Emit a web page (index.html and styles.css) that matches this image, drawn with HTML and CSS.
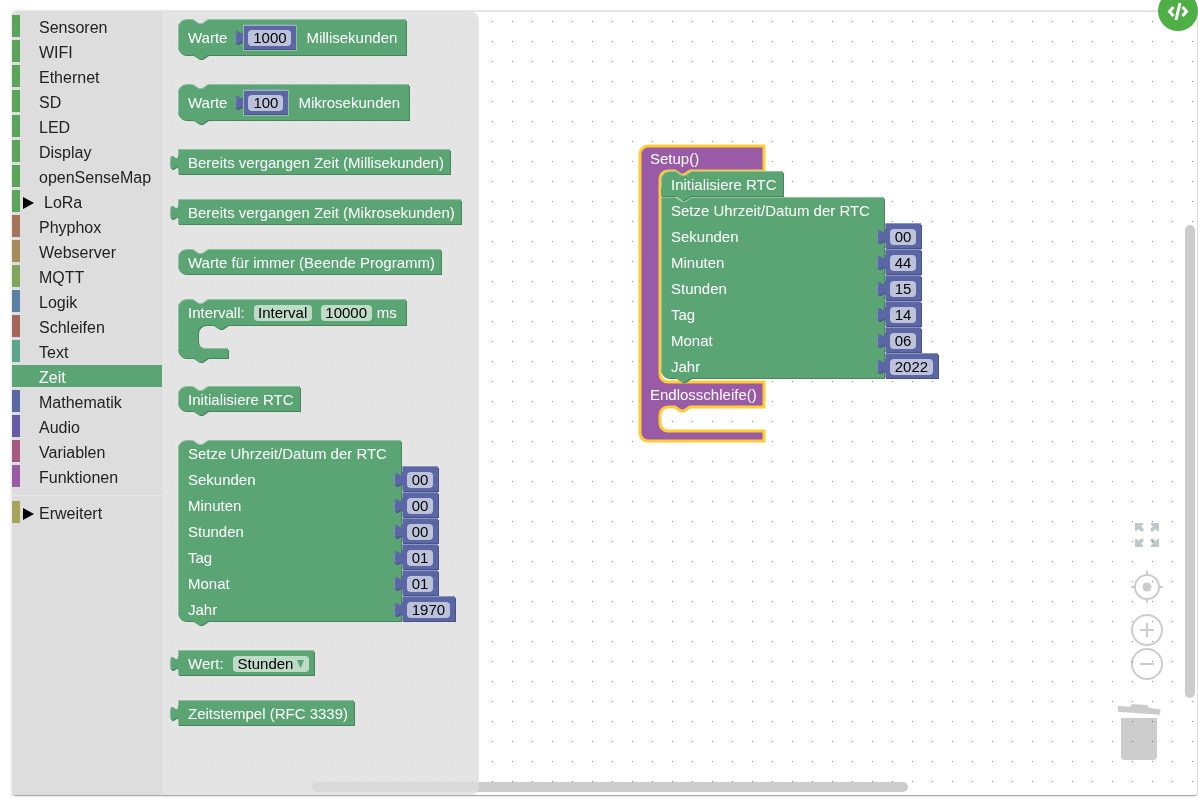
FILE: index.html
```html
<!DOCTYPE html>
<html lang="de">
<head>
<meta charset="utf-8">
<title>Blockeditor</title>
<link rel="stylesheet" href="styles.css">
</head>
<body>
<main class="editor">
  <nav class="toolbox" aria-label="Kategorien">
    <button class="category sensor">Sensoren</button>
    <button class="category sensor">WIFI</button>
    <button class="category sensor">Ethernet</button>
    <button class="category sensor">SD</button>
    <button class="category sensor">LED</button>
    <button class="category sensor">Display</button>
    <button class="category sensor">openSenseMap</button>
    <button class="category sensor parent nested"><svg class="caret" viewBox="0 0 11 12"><path d="M0 0L11 6L0 12Z"/></svg>LoRa</button>
    <button class="category phyphox">Phyphox</button>
    <button class="category webserver">Webserver</button>
    <button class="category mqtt">MQTT</button>
    <button class="category logic">Logik</button>
    <button class="category loops">Schleifen</button>
    <button class="category text">Text</button>
    <button class="category time selected">Zeit</button>
    <button class="category math">Mathematik</button>
    <button class="category audio">Audio</button>
    <button class="category variables">Variablen</button>
    <button class="category functions">Funktionen</button>
    <hr class="separator">
    <button class="category advanced parent"><svg class="caret" viewBox="0 0 11 12"><path d="M0 0L11 6L0 12Z"/></svg>Erweitert</button>
  </nav>

  <section class="workspace" aria-label="Arbeitsbereich">
    <svg class="dots" aria-hidden="true">
      <defs><pattern id="dot-grid" width="20" height="20" patternUnits="userSpaceOnUse"><rect class="dot" x="10" y="9" width="1" height="1"/></pattern></defs>
      <rect width="100%" height="100%" fill="url(#dot-grid)"/>
    </svg>

    <div class="block root" data-shape="selected">
      <div class="row">Setup()</div>
      <div class="mouth filled">
        <div class="block green" data-shape="statement"><div class="row">Initialisiere RTC</div></div>
        <div class="block green" data-shape="statement">
          <div class="row title">Setze Uhrzeit/Datum der RTC</div>
          <div class="row"><label for="w-sec">Sekunden</label><div class="plug"><div class="block number" data-shape="value"><input class="field two" id="w-sec" value="00"></div></div></div>
          <div class="row"><label for="w-min">Minuten</label><div class="plug"><div class="block number" data-shape="value"><input class="field two" id="w-min" value="44"></div></div></div>
          <div class="row"><label for="w-hour">Stunden</label><div class="plug"><div class="block number" data-shape="value"><input class="field two" id="w-hour" value="15"></div></div></div>
          <div class="row"><label for="w-day">Tag</label><div class="plug"><div class="block number" data-shape="value"><input class="field two" id="w-day" value="14"></div></div></div>
          <div class="row"><label for="w-month">Monat</label><div class="plug"><div class="block number" data-shape="value"><input class="field two" id="w-month" value="06"></div></div></div>
          <div class="row"><label for="w-year">Jahr</label><div class="plug"><div class="block number" data-shape="value"><input class="field four" id="w-year" value="2022"></div></div></div>
        </div>
      </div>
      <div class="row">Endlosschleife()</div>
      <div class="mouth"></div>
      <div class="foot"></div>
    </div>

    <div class="scrollbar vertical"></div>
    <div class="scrollbar horizontal"></div>

    <div class="controls">
      <button class="control fullscreen" aria-label="Vollbild"><svg width="24" height="24" viewBox="0 0 24 24"><g id="corner"><path d="M0 0H8V2L6 3L9 6.500L7 9L3 6L2 8H0Z"/></g><use href="#corner" transform="matrix(-1 0 0 1 24 0)"/><use href="#corner" transform="matrix(1 0 0 -1 0 24)"/><use href="#corner" transform="matrix(-1 0 0 -1 24 24)"/></svg></button>
      <button class="control target" aria-label="Zentrieren"><svg width="32" height="32" viewBox="0 0 32 32"><circle class="line" cx="16" cy="16" r="12"/><circle cx="16" cy="16" r="4.500"/><path class="line" d="M16 0V4M16 28V32M0 16H4M28 16H32"/></svg></button>
      <button class="control plus" aria-label="Vergrößern"><svg width="32" height="32" viewBox="0 0 32 32"><circle class="line" cx="16" cy="16" r="15"/><path class="line" d="M9 16H23M16 9V23"/></svg></button>
      <button class="control minus" aria-label="Verkleinern"><svg width="32" height="32" viewBox="0 0 32 32"><circle class="line" cx="16" cy="16" r="15"/><path class="line" d="M9 16H23"/></svg></button>
      <button class="control trash" aria-label="Papierkorb"><svg width="45" height="56" viewBox="0 0 45 56"><path d="M0 2L12 2.700L14 0L29 1L31.500 4L42.500 5.200L42 10.800L0 7.700Z"/><path d="M3 14H39V52A4 4 0 0 1 35 56H7A4 4 0 0 1 3 52Z"/></svg></button>
    </div>

    <div class="flyout">
      <div class="block green" data-shape="statement">
        <div class="row tall"><label for="f-ms">Warte</label><div class="block number inline" data-shape="value"><input class="field four" id="f-ms" value="1000"></div><span>Millisekunden</span></div>
      </div>
      <div class="block green" data-shape="statement">
        <div class="row tall"><label for="f-us">Warte</label><div class="block number inline" data-shape="value"><input class="field three" id="f-us" value="100"></div><span>Mikrosekunden</span></div>
      </div>
      <div class="block green" data-shape="value"><div class="row">Bereits vergangen Zeit (Millisekunden)</div></div>
      <div class="block green" data-shape="value"><div class="row">Bereits vergangen Zeit (Mikrosekunden)</div></div>
      <div class="block green" data-shape="final"><div class="row">Warte für immer (Beende Programm)</div></div>
      <div class="block green" data-shape="statement">
        <div class="row fields"><label for="f-name">Intervall:</label><input class="field name" id="f-name" value="Interval"><span class="pair"><input class="field five" id="f-interval" value="10000"><label for="f-interval">ms</label></span></div>
        <div class="mouth"></div>
        <div class="foot"></div>
      </div>
      <div class="block green" data-shape="statement"><div class="row">Initialisiere RTC</div></div>
      <div class="block green" data-shape="statement">
        <div class="row title">Setze Uhrzeit/Datum der RTC</div>
        <div class="row"><label for="f-sec">Sekunden</label><div class="plug"><div class="block number" data-shape="value"><input class="field two" id="f-sec" value="00"></div></div></div>
        <div class="row"><label for="f-min">Minuten</label><div class="plug"><div class="block number" data-shape="value"><input class="field two" id="f-min" value="00"></div></div></div>
        <div class="row"><label for="f-hour">Stunden</label><div class="plug"><div class="block number" data-shape="value"><input class="field two" id="f-hour" value="00"></div></div></div>
        <div class="row"><label for="f-day">Tag</label><div class="plug"><div class="block number" data-shape="value"><input class="field two" id="f-day" value="01"></div></div></div>
        <div class="row"><label for="f-month">Monat</label><div class="plug"><div class="block number" data-shape="value"><input class="field two" id="f-month" value="01"></div></div></div>
        <div class="row"><label for="f-year">Jahr</label><div class="plug"><div class="block number" data-shape="value"><input class="field four" id="f-year" value="1970"></div></div></div>
      </div>
      <div class="block green" data-shape="value">
        <div class="row choice"><label for="f-unit">Wert:</label><span class="dropdown"><select id="f-unit"><option>Stunden</option></select><svg width="7" height="8" viewBox="0 0 7 8"><path d="M0 0H7L3.500 8Z"/></svg></span></div>
      </div>
      <div class="block green" data-shape="value"><div class="row">Zeitstempel (RFC 3339)</div></div>
    </div>
  </section>
</main>
<button class="code-toggle" aria-label="Code anzeigen"><svg width="24" height="20" viewBox="0 0 24 20"><path d="M7.500 6L3.500 10.500L7.500 15M16.500 6L20.500 10.500L16.500 15M14 2L10 19"/></svg></button>
<script src="blocks.js"></script>
</body>
</html>
```
FILE: styles.css
```css
* { box-sizing: border-box; }

body {
  margin: 0;
  background: #fff;
  font-family: "Liberation Sans", Arial, sans-serif;
  overflow: hidden;
}

button, input, select { font: inherit; border: 0; margin: 0; padding: 0; background: none; }

.editor {
  display: flex;
  margin: 11px 0 12px 12px;
  height: calc(100vh - 23px);
  border: 1px solid #dedede;
  border-left: 0;
  border-bottom-color: #a8a8a8;
  border-radius: 4px;
  box-shadow: 0 0 3px rgba(0, 0, 0, .2);
  overflow: hidden;
}

/* Toolbox */
.toolbox {
  display: flex;
  flex-direction: column;
  gap: 3px;
  flex: 0 0 150px;
  padding-top: 3px;
  background: #ddd;
}

.category {
  display: flex;
  align-items: center;
  height: 22px;
  padding-top: 3px;
  padding-left: 19px;
  border-left: 8px solid;
  color: #222;
  font-size: 16px;
  line-height: 19px;
  text-align: left;
}
.category.parent { padding-left: 3px; gap: 5px; }
.category.nested { gap: 10px; }
.caret { width: 11px; height: 12px; fill: #000; }
.separator { width: 100%; height: 1px; margin: 5px 0 2px; border: 0; background: #e8e8e8; }

.sensor { border-color: #5ba55b; }
.phyphox { border-color: #a5745b; }
.webserver { border-color: #a58c5b; }
.mqtt { border-color: #80a55b; }
.logic { border-color: #5b80a5; }
.loops { border-color: #a5675b; }
.text { border-color: #5ba58c; }
.time { border-color: #5ba574; }
.math { border-color: #5b67a5; }
.audio { border-color: #675ba5; }
.variables { border-color: #a55b80; }
.functions { border-color: #995ba5; }
.advanced { border-color: #a5a55b; }
.category.selected { background: #5ba574; color: #fff; }

/* Workspace */
.workspace { position: relative; flex: 1; overflow: hidden; }
.dots { display: block; width: 100%; height: 100%; }
.dot { fill: #5ba55b; }

.scrollbar { position: absolute; border-radius: 5px; background: #ccc; }
.vertical { right: 2px; bottom: 97px; width: 10px; height: 473px; }
.horizontal { left: 150px; bottom: 3px; width: 596px; height: 10px; }

.flyout {
  position: absolute;
  inset: 0 auto 0 0;
  display: flex;
  flex-direction: column;
  align-items: flex-start;
  gap: 24px;
  width: 317px;
  padding: 8px 16px;
  border-radius: 0 8px 8px 0;
  background: rgba(221, 221, 221, .8);
}
.flyout > [data-shape="statement"] { margin-bottom: 4px; }

/* Blocks */
.block {
  position: relative;
  isolation: isolate;
  width: max-content;
  color: #fff;
  font-size: 15px;
  line-height: 24px;
  white-space: nowrap;
}
.root { position: absolute; left: 478px; top: 134px; width: 125px; }
.outline { position: absolute; inset: 0; z-index: -1; width: 100%; height: 100%; overflow: visible; pointer-events: none; }

.green { --fill: #5ba574; --light: #8cc09e; --dark: #49845d; }
.number { --fill: #5b67a5; --light: #8c95c0; --dark: #495284; }
.root { --fill: #995ba5; }
.face { fill: var(--fill); }
.shade { fill: var(--dark); }
.shine { fill: none; stroke: var(--light); }
[data-shape="selected"] > .outline .face { stroke: #fc3; stroke-width: 3; }

.row { display: flex; align-items: center; gap: 9px; height: 26px; padding: 0 7px 0 10px; }
.row:has(+ .mouth) { height: 25px; }
.row.tall { height: 37px; padding: 0 10px 2px; }
.row.fields { padding-right: 10px; }
.row.title { padding-right: 15px; }
.row:has(> .plug) { justify-content: space-between; padding-right: 0; }
.plug { width: 0; }
.mouth { height: 24px; margin-left: 21px; }
.mouth.filled { height: auto; width: 0; padding: 1px 0 2px; }
.foot { height: 10px; }

.number { display: flex; align-items: center; height: 26px; padding: 0 6px 0 5px; }
.inline { margin-left: 7px; outline: 1px solid #8cc09e; outline-offset: -1px; }

.field, .dropdown {
  height: 16px;
  border-radius: 4px;
  background: rgba(255, 255, 255, .6);
  color: #000;
  line-height: 16px;
  text-align: center;
}
.two { width: 26px; }
.three { width: 35px; }
.four { width: 43px; }
.five { width: 51px; }
.name { width: 58px; }
.pair { display: flex; align-items: center; gap: 5px; }
.row.choice { padding-right: 6px; }
.dropdown { display: flex; align-items: center; gap: 3px; padding: 0 5px; fill: #5ba574; }
.dropdown select { appearance: none; height: 16px; color: #000; }

/* Overlay controls */
.controls { position: absolute; right: 34px; bottom: 35px; display: flex; flex-direction: column; align-items: flex-end; fill: #ccc; mix-blend-mode: multiply; }
.control { display: flex; justify-content: center; align-items: center; min-width: 32px; height: 32px; }
.control .line { fill: none; stroke: #ccc; stroke-width: 2; }
.fullscreen { fill: #bec8cd; margin-bottom: 20px; }
.target { margin-bottom: 11px; }
.plus { margin-bottom: 2px; }
.minus { margin-bottom: 24px; }
.trash { height: 56px; }

.code-toggle {
  position: absolute;
  right: 0;
  top: -9px;
  display: flex;
  align-items: center;
  justify-content: center;
  width: 40px;
  height: 40px;
  border-radius: 50%;
  background: #4eaf47;
}
.code-toggle path { fill: none; stroke: #fff; stroke-width: 3; }
```
FILE: blocks.js
```js
// Draws the puzzle-piece outline behind each block, fitted to its content.
const NS = "http://www.w3.org/2000/svg";
const FOOT = 50;

function joins(block, side) {
  const other = block[side];
  return block.dataset.shape === "statement" &&
    block.parentElement.classList.contains("mouth") &&
    other !== null && other.classList.contains("block");
}

function edge(block, shape, w, h, joinTop, joinBottom) {
  if (shape === "value") {
    return `M0,0 H${w} V${h} H0 V20 c0,-10 -8,8 -8,-7.5 s8,2.5 8,-7.5 Z`;
  }
  let d = joinTop ? "M0,0" : "M0,8 A8,8 0 0 1 8,0";
  if (shape !== "selected") d += " H15 l6,4 h3 l6,-4";
  d += ` H${w}`;
  for (const mouth of block.querySelectorAll(":scope > .mouth")) {
    const top = mouth.offsetTop;
    const bottom = top + mouth.offsetHeight;
    const right = shape === "selected" ? w : FOOT;
    d += ` V${top} H50 l-6,4 h-3 l-6,-4 H28 a8,8 0 0 0 -8,8 V${bottom - 8} a8,8 0 0 0 8,8 H${right}`;
  }
  d += ` V${h}`;
  if (shape === "statement") d += " H30 l-6,4 h-3 l-6,-4";
  return d + (joinBottom ? " H0 Z" : " H8 a8,8 0 0 1 -8,-8 Z");
}

function shine(block, shape, w, h, joinTop) {
  if (shape === "value") {
    return `M${w},-0.5 H0.5 V5 M0.5,19 V${h} M-7,17 C-8,14 -8,10 -6.5,7.5`;
  }
  const corner = joinTop ? "V-0.5" : "V8 A8,8 0 0 1 8,-0.5";
  let d = `M0.5,${h - 8} ${corner} H15 l6,4 h3 l6,-4 H${w}`;
  for (const mouth of block.querySelectorAll(":scope > .mouth")) {
    const bottom = mouth.offsetTop + mouth.offsetHeight;
    d += ` M23,${bottom - 2} Q25,${bottom - 0.5} 28,${bottom - 0.5} H${FOOT}`;
  }
  return d;
}

function addPath(svg, name, d, shift) {
  const path = document.createElementNS(NS, "path");
  path.setAttribute("class", name);
  path.setAttribute("d", d);
  if (shift) path.setAttribute("transform", "translate(1 1)");
  svg.append(path);
}

for (const block of document.querySelectorAll(".block")) {
  const shape = block.dataset.shape;
  const selected = shape === "selected";
  const joinTop = joins(block, "previousElementSibling");
  const joinBottom = joins(block, "nextElementSibling");
  const hasFoot = block.querySelector(":scope > .foot") !== null;
  const w = block.offsetWidth - 1;
  const h = block.offsetHeight - (selected ? 0 : hasFoot ? 1 : 2);
  const svg = document.createElementNS(NS, "svg");
  svg.setAttribute("class", "outline");
  const d = edge(block, shape, w, h, joinTop, joinBottom);
  if (!selected) addPath(svg, "shade", d, true);
  addPath(svg, "face", d, false);
  if (!selected) addPath(svg, "shine", shine(block, shape, w, h, joinTop), false);
  block.prepend(svg);
}
```
